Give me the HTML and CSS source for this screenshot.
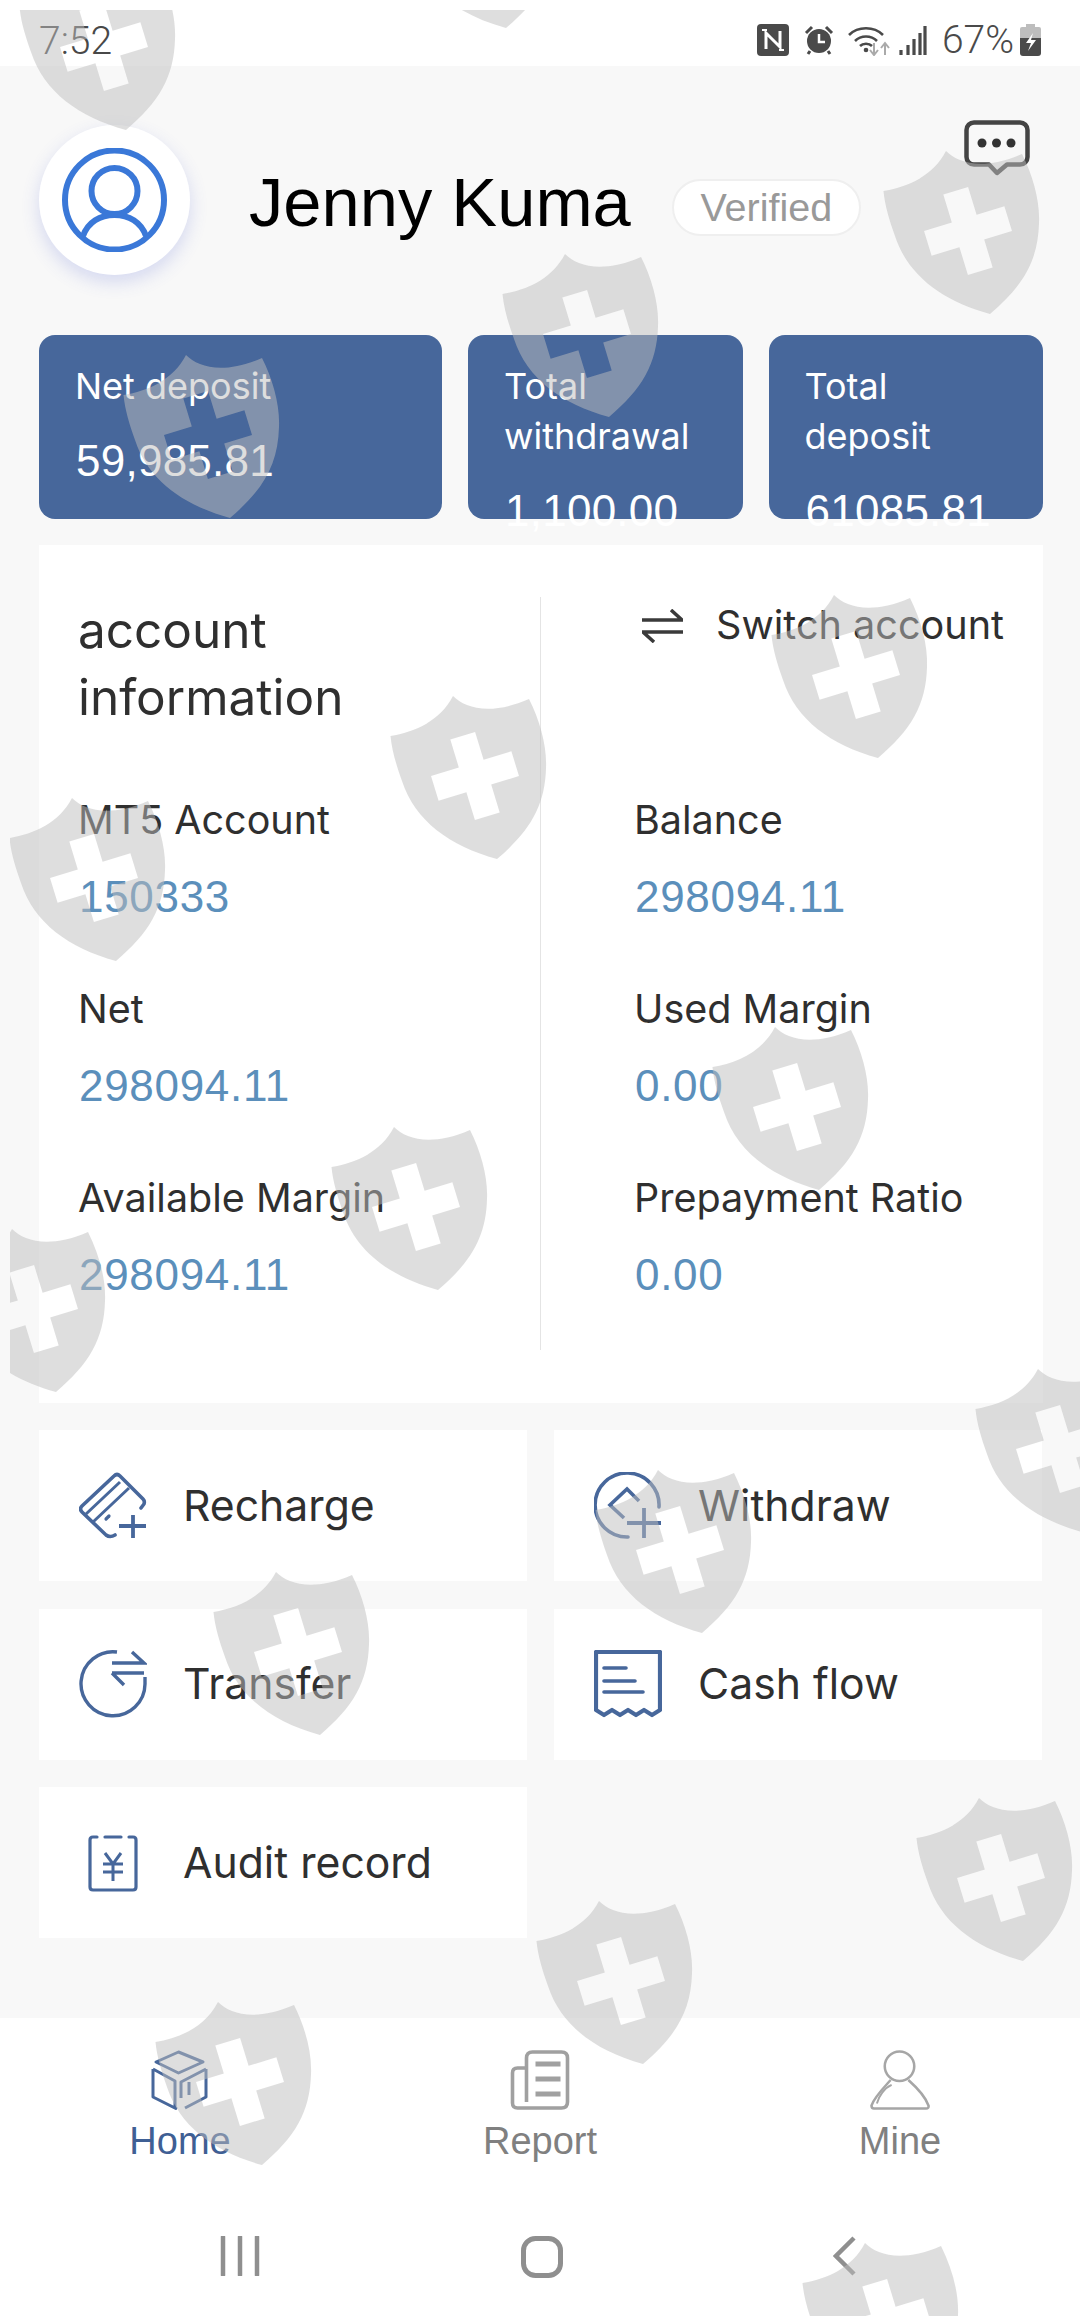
FILE: index.html
```html
<!DOCTYPE html>
<html lang="en">
<head>
<meta charset="utf-8">
<title>Account home</title>
<link rel="stylesheet" href="styles.css">
</head>
<body>
<div class="screen">
  <div class="status">
    <span class="clock">7:52</span>
    <div class="status-icons">
      <svg class="si-nfc" viewBox="0 0 32 32"><rect width="32" height="32" rx="4" fill="#4a4a4a"/><path d="M9 25V9l14 14V7" fill="none" stroke="#fff" stroke-width="3"/><path d="M5 6h5M22 26h5" stroke="#fff" stroke-width="2"/></svg>
      <svg class="si-alarm" viewBox="0 0 30 30"><circle cx="15" cy="16" r="12" fill="#4a4a4a"/><path d="M15 9v8h6" fill="none" stroke="#fff" stroke-width="2.5"/><path d="M2 8l6-6M28 8l-6-6M6 26l-2 3M24 26l2 3" stroke="#4a4a4a" stroke-width="3"/></svg>
      <svg class="si-wifi" viewBox="0 0 42 31"><path d="M1 10C10 1 26 1 35 10M7 16C13 10 23 10 29 16M12 21c3-3 9-3 12 0" fill="none" stroke="#4a4a4a" stroke-width="2.6"/><circle cx="18" cy="25" r="2.3" fill="#4a4a4a"/><path d="M26 18v11M22 25l4 5 4-5" fill="none" stroke="#aaa" stroke-width="2"/><path d="M37 30V19M33 23l4-5 4 5" fill="none" stroke="#aaa" stroke-width="2"/></svg>
      <svg class="si-signal" viewBox="0 0 28 29"><path d="M2 24v5M9 19v10M15 13v16M21 7v22M26 0v29" stroke="#4a4a4a" stroke-width="3.2"/></svg>
      <span class="pct">67%</span>
      <svg class="si-batt" viewBox="0 0 21 32"><path d="M6 0h9v3h4a2 2 0 0 1 2 2v9H0V5a2 2 0 0 1 2-2h4z" fill="#bdbdbd"/><path d="M0 14h21v15a3 3 0 0 1-3 3H3a3 3 0 0 1-3-3z" fill="#4a4a4a"/><path d="M13 9L6 19h5l-3 8 8-11h-5z" fill="#fff"/></svg>
    </div>
  </div>

  <main class="main">
    <header class="profile">
      <div class="avatar">
        <svg class="avatar-icon" viewBox="0 0 105 104"><circle cx="52.5" cy="52" r="49.5" fill="none" stroke="#3a78d8" stroke-width="6"/><circle cx="52.5" cy="43" r="23" fill="none" stroke="#3a78d8" stroke-width="6"/><path d="M21 88C26 74 38 67 52.500 67C67 67 79 74 84 88" fill="none" stroke="#3a78d8" stroke-width="6"/></svg>
      </div>
      <h1 class="name">Jenny Kuma</h1>
      <span class="pill">Verified</span>
      <svg class="chat" viewBox="0 0 66 56"><path d="M10 2.500H56a7.500 7.500 0 0 1 7.500 7.500V37A7.500 7.500 0 0 1 56 44.500H43L33 53 25 44.500H10A7.500 7.500 0 0 1 2.500 37V10A7.500 7.500 0 0 1 10 2.500Z" fill="#f8f8f8" fill-opacity=".4" stroke="#444" stroke-width="4.500" stroke-linejoin="round"/><circle cx="18" cy="23" r="4.500" fill="#333"/><circle cx="32.500" cy="23" r="4.500" fill="#333"/><circle cx="47" cy="23" r="4.500" fill="#333"/></svg>
    </header>

    <section class="stats">
      <div class="stat stat-wide"><p class="stat-label">Net deposit</p><p class="stat-value">59,985.81</p></div>
      <div class="stat"><p class="stat-label">Total withdrawal</p><p class="stat-value">1,100.00</p></div>
      <div class="stat"><p class="stat-label">Total deposit</p><p class="stat-value">61085.81</p></div>
    </section>

    <section class="account">
      <div class="acc-col acc-left">
        <h2 class="acc-title">account information</h2>
        <div class="acc-item"><p class="acc-label">MT5 Account</p><p class="acc-value">150333</p></div>
        <div class="acc-item"><p class="acc-label">Net</p><p class="acc-value">298094.11</p></div>
        <div class="acc-item"><p class="acc-label">Available Margin</p><p class="acc-value">298094.11</p></div>
      </div>
      <div class="acc-col acc-right">
        <div class="switch">
          <svg class="switch-icon" viewBox="0 0 41 34"><path d="M0 11H40L29 1" fill="none" stroke="#3a3a3a" stroke-width="3.500"/><path d="M41 23H1L12 33" fill="none" stroke="#3a3a3a" stroke-width="3.500"/></svg>
          <span class="switch-text">Switch account</span>
        </div>
        <div class="acc-item"><p class="acc-label">Balance</p><p class="acc-value">298094.11</p></div>
        <div class="acc-item"><p class="acc-label">Used Margin</p><p class="acc-value">0.00</p></div>
        <div class="acc-item"><p class="acc-label">Prepayment Ratio</p><p class="acc-value">0.00</p></div>
      </div>
    </section>

    <section class="actions">
      <div class="tile">
        <svg class="tile-icon" viewBox="0 0 68 68"><path d="M62 36L65 32Q66 29 64 27L41 4Q38 1 35 4L3 34Q0 37 3 40L27 63Q31 66 36 63" fill="none" stroke="#47679b" stroke-width="3.600" stroke-linecap="round"/><path d="M7 42L41 10M14 50L50 16" fill="none" stroke="#47679b" stroke-width="3"/><path d="M27 47l3-3" stroke="#47679b" stroke-width="3.200" stroke-linecap="round"/><path d="M40 54H67M54 43V66" stroke="#47679b" stroke-width="3.800"/></svg>
        <span class="tile-text">Recharge</span>
      </div>
      <div class="tile">
        <svg class="tile-icon" viewBox="0 0 68 68"><path d="M65 35A32 32 0 1 0 34 65" fill="none" stroke="#47679b" stroke-width="3.600" stroke-linecap="round"/><path d="M45 29L33 17 16 33 30 46" fill="none" stroke="#47679b" stroke-width="3.600"/><path d="M33 51H67M50 36V66" stroke="#47679b" stroke-width="3.800"/></svg>
        <span class="tile-text">Withdraw</span>
      </div>
      <div class="tile">
        <svg class="tile-icon" viewBox="0 0 68 68"><path d="M38 2A32 32 0 1 0 66 34V27" fill="none" stroke="#47679b" stroke-width="3.400"/><path d="M33 13H65L53 2M33 23H65M33 23L45 35" fill="none" stroke="#47679b" stroke-width="3.400"/></svg>
        <span class="tile-text">Transfer</span>
      </div>
      <div class="tile">
        <svg class="tile-icon" viewBox="0 0 68 68"><path d="M2 2H66V60L58 65 50 60 42 65 34 60 26 65 18 60 10 65 2 60Z" fill="none" stroke="#47679b" stroke-width="4.200" stroke-linejoin="round"/><path d="M10 18H32M10 31H41M10 42H49" stroke="#47679b" stroke-width="3.600" stroke-linecap="round"/></svg>
        <span class="tile-text">Cash flow</span>
      </div>
      <div class="tile">
        <svg class="tile-icon" viewBox="0 0 68 68"><path d="M18 8H14Q11 8 11 11V58Q11 61 14 61H54Q57 61 57 58V11Q57 8 54 8H50M26 8H42" fill="none" stroke="#47679b" stroke-width="3.200" stroke-linecap="round"/><path d="M26 24L34 35 42 24M24 35H44M24 43H44M34 35V52" fill="none" stroke="#47679b" stroke-width="3"/></svg>
        <span class="tile-text">Audit record</span>
      </div>
    </section>
  </main>

  <footer class="footer">
    <nav class="tabs">
      <div class="tab tab-active">
        <svg class="tab-icon" viewBox="0 0 58 60"><path d="M27.500 2L52 12 27.500 23 5 12Z" fill="none" stroke="#47679b" stroke-width="3" stroke-linejoin="round"/><path d="M2 19V47L26 59M2 19L24 31V59M55 19V47L34 58M55 19L30 32V48M38 32V45" fill="none" stroke="#47679b" stroke-width="3" stroke-linejoin="round"/></svg>
        <span class="tab-text">Home</span>
      </div>
      <div class="tab">
        <svg class="tab-icon" viewBox="0 0 59 60"><path d="M16 52V8Q16 2 22 2H51Q57 2 57 8V52Q57 58 51 58H7Q2 58 2 53V23Q2 18 7 18H16" fill="none" stroke="#a0a0a0" stroke-width="3.600"/><path d="M25 14H50M25 29H50M25 44H50" stroke="#a0a0a0" stroke-width="5"/></svg>
        <span class="tab-text">Report</span>
      </div>
      <div class="tab">
        <svg class="tab-icon" viewBox="0 0 61 60"><ellipse cx="30" cy="16" rx="15" ry="15" fill="none" stroke="#a6a6a6" stroke-width="2.600"/><path d="M21 30C12 40 4 48 1.500 56Q1.500 59 4 59H57Q60 59 59.500 56C56 46 48 38 39 30" fill="none" stroke="#a6a6a6" stroke-width="2.600"/><path d="M7 54C9 46 15 38 22 35" fill="none" stroke="#a6a6a6" stroke-width="2"/></svg>
        <span class="tab-text">Mine</span>
      </div>
    </nav>
    <div class="sysnav">
      <div class="sys-cell"><svg class="sys-recent" viewBox="0 0 40 40"><path d="M3 1V39M20 1V39M37 1V39" stroke="#8f8f8f" stroke-width="4.500" stroke-linecap="round"/></svg></div>
      <div class="sys-cell"><svg class="sys-home" viewBox="0 0 42 42"><rect x="2.500" y="2.500" width="37" height="37" rx="12" fill="none" stroke="#8f8f8f" stroke-width="5"/></svg></div>
      <div class="sys-cell"><svg class="sys-back" viewBox="0 0 23 40"><path d="M21 2L3 20 21 38" fill="none" stroke="#8f8f8f" stroke-width="4.500"/></svg></div>
    </div>
  </footer>

  <svg class="watermarks" viewBox="10 10 1070 2306" aria-hidden="true">
    <defs>
      <path id="shield" fill-rule="evenodd" d="M0.500 40C25 36 50 25 63 0C75 12 100 20 139 3C150 25 157 50 156 72C155 110 140 135 107 163C60 150 25 125 12 85C6 68 2 55 0.500 40ZM60.300 43.600L68.800 71.400 41 79.900 48.600 104.700 76.400 96.200 84.900 124 109.700 116.400 101.200 88.600 129 80.100 121.400 55.300 93.600 63.800 85.100 36Z"/>
    </defs>
    <g class="wm">
      <use href="#shield" x="19" y="-33"/>
      <use href="#shield" x="399" y="-135"/>
      <use href="#shield" x="883" y="151"/>
      <use href="#shield" x="502" y="254"/>
      <use href="#shield" x="123" y="355"/>
      <use href="#shield" x="771" y="595"/>
      <use href="#shield" x="390" y="696"/>
      <use href="#shield" x="9" y="798"/>
      <use href="#shield" x="712" y="1027"/>
      <use href="#shield" x="331" y="1127"/>
      <use href="#shield" x="-51" y="1229"/>
      <use href="#shield" x="975" y="1369"/>
      <use href="#shield" x="595" y="1470"/>
      <use href="#shield" x="213" y="1572"/>
      <use href="#shield" x="916" y="1798"/>
      <use href="#shield" x="536" y="1901"/>
      <use href="#shield" x="155" y="2002"/>
      <use href="#shield" x="802" y="2243"/>
    </g>
  </svg>
</div>
</body>
</html>
```

FILE: styles.css
```css
* { box-sizing: border-box; }
html, body { margin: 0; padding: 0; background: #fff; }
p, h1, h2 { margin: 0; font-weight: 400; }
body { font-family: "Liberation Sans", Arial, sans-serif; }

.screen { position: relative; width: 1080px; height: 2316px; overflow: hidden; background: #fff; }

/* status bar */
.status { height: 66px; display: flex; align-items: flex-start; justify-content: space-between; padding: 21px 39px 0; background: #fff; }
.clock { font: 300 39px/40px Roboto, sans-serif; color: #484848; }
.status-icons { display: flex; align-items: center; height: 40px; margin-top: -1px; }
.status-icons svg { display: block; flex: none; }
.si-nfc { width: 32px; height: 32px; }
.si-alarm { width: 30px; height: 30px; margin-left: 15px; }
.si-wifi { width: 42px; height: 31px; margin-left: 14px; }
.si-signal { width: 28px; height: 29px; margin-left: 9px; }
.pct { font: 300 39px/40px Roboto, sans-serif; color: #4a4a4a; margin-left: 15px; }
.si-batt { width: 21px; height: 32px; margin-left: 6px; }

/* main */
.main { height: 1952px; padding: 59px 37px 0 39px; background: #f8f8f8; }

.profile { display: flex; align-items: center; height: 150px; }
.avatar { width: 151px; height: 150px; flex: none; border-radius: 50%; background: #fff; display: flex; align-items: center; justify-content: center; box-shadow: 0 7px 18px rgba(70, 90, 210, .2); }
.avatar-icon { width: 105px; height: 104px; display: block; }
.name { margin: 6px 0 0 59px; font-size: 68.7px; line-height: 80px; color: #000; white-space: nowrap; }
.pill { margin: 14px 0 0 41px; height: 57px; width: 189px; border: 2px solid #efefef; border-radius: 29px; background: #fff; color: #999; font-size: 39.5px; line-height: 53px; text-align: center; flex: none; }
.chat { width: 66px; height: 56px; flex: none; align-self: flex-start; margin: -5px 13px 0 auto; display: block; }

/* stats */
.stats { display: flex; gap: 26px; margin-top: 60px; height: 184px; }
.stat { width: 274.5px; height: 184px; flex: none; padding: 26px 20px 0 36px; background: #47679b; border-radius: 16px; color: #fff; }
.stat-wide { width: 403px; }
.stat-label { font-family: Inter, "Liberation Sans", sans-serif; font-size: 36px; line-height: 50px; }
.stat-value { font-size: 44px; line-height: 50px; margin: 25px 0 0 1px; letter-spacing: .25px; }

/* account */
.account { display: flex; margin-top: 26px; height: 858px; padding: 52px 0 53px; background: #fff; }
.acc-col { height: 100%; }
.acc-left { width: 502px; flex: none; padding-left: 39px; border-right: 1px solid #e4e4e4; }
.acc-right { flex: 1; min-width: 0; padding-left: 93px; }
.acc-title { font-family: Inter, "Liberation Sans", sans-serif; font-size: 49.5px; line-height: 67px; height: 134px; width: 300px; margin: 0 0 63px; color: #2f2f2f; }
.acc-item { height: 189px; }
.acc-label { font-family: Inter, "Liberation Sans", sans-serif; font-size: 39.5px; line-height: 50px; padding-top: 1px; color: #2f2f2f; white-space: nowrap; }
.acc-value { font-size: 44px; line-height: 60px; margin: 22px 0 0 1px; color: #5b8fbb; letter-spacing: .7px; }
.switch { display: flex; align-items: flex-start; height: 134px; margin: 0 0 63px 8px; }
.switch-icon { width: 41px; height: 34px; flex: none; margin-top: 12px; display: block; }
.switch-text { font-family: Inter, "Liberation Sans", sans-serif; margin-left: 33px; font-size: 39.6px; line-height: 50px; padding-top: 3px; color: #2f2f2f; white-space: nowrap; }

/* actions */
.actions { display: grid; grid-template-columns: 488px 488px; column-gap: 27px; row-gap: 27.5px; grid-auto-rows: 151px; margin-top: 27px; }
.tile { display: flex; align-items: center; padding-left: 40px; background: #fff; }
.tile-icon { width: 68px; height: 68px; flex: none; display: block; }
.tile-text { font-family: Inter, "Liberation Sans", sans-serif; margin: 0 0 0 36px; font-size: 42.7px; line-height: 50px; color: #2f2f2f; }

/* footer */
.footer { height: 298px; background: #fff; }
.tabs { display: flex; height: 186px; padding-top: 32px; }
.tab { flex: 1; display: flex; flex-direction: column; align-items: center; color: #808080; }
.tab-icon { height: 60px; width: 60px; display: block; }
.tab-text { font-size: 38px; line-height: 42px; margin-top: 10px; }
.tab-active { color: #3f5f94; }
.sysnav { display: flex; height: 112px; padding: 32px 85px 0 89px; }
.sys-cell { flex: 1; display: flex; justify-content: center; }
.sys-recent { width: 40px; height: 40px; display: block; }
.sys-home { width: 42px; height: 42px; display: block; }
.sys-back { width: 23px; height: 40px; display: block; }

/* watermark layer */
.watermarks { position: absolute; left: 10px; top: 10px; width: 1070px; height: 2306px; pointer-events: none; overflow: hidden; }
.wm { fill: rgba(190, 190, 190, .5); }
```
